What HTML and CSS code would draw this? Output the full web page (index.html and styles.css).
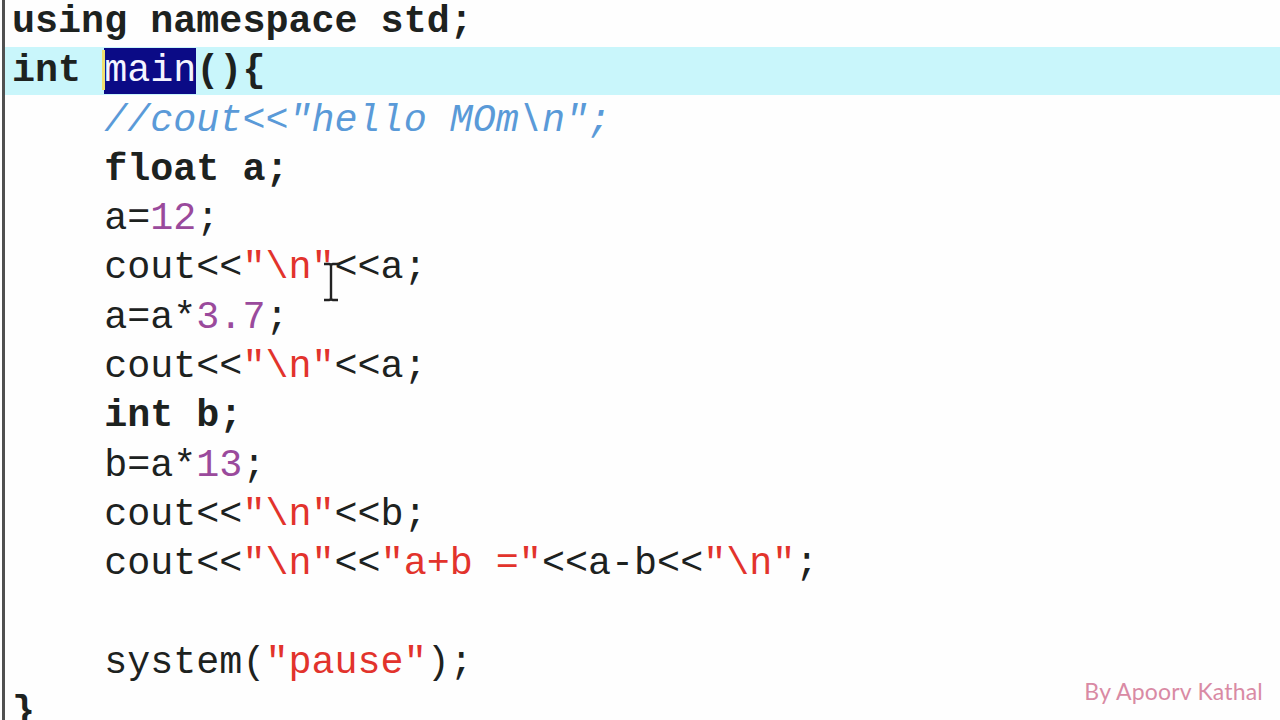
FILE: index.html
```html
<!DOCTYPE html>
<html>
<head>
<meta charset="utf-8">
<link rel="stylesheet" href="styles.css">
</head>
<body>
<div class="editor">
  <div class="code">
    <div class="line b">using namespace std;</div>
    <div class="line cur"><span class="b">int </span><span class="sel"><span class="caret"></span>main</span><span class="b">(){</span></div>
    <div class="line">    <span class="cm">//cout&lt;&lt;"hello MOm\n";</span></div>
    <div class="line">    <span class="b">float a;</span></div>
    <div class="line">    a=<span class="num">12</span>;</div>
    <div class="line">    cout&lt;&lt;<span class="str">"\n"</span>&lt;&lt;a;</div>
    <div class="line">    a=a*<span class="num">3.7</span>;</div>
    <div class="line">    cout&lt;&lt;<span class="str">"\n"</span>&lt;&lt;a;</div>
    <div class="line">    <span class="b">int b;</span></div>
    <div class="line">    b=a*<span class="num">13</span>;</div>
    <div class="line">    cout&lt;&lt;<span class="str">"\n"</span>&lt;&lt;b;</div>
    <div class="line">    cout&lt;&lt;<span class="str">"\n"</span>&lt;&lt;<span class="str">"a+b ="</span>&lt;&lt;a-b&lt;&lt;<span class="str">"\n"</span>;</div>
    <div class="line"> </div>
    <div class="line">    system(<span class="str">"pause"</span>);</div>
    <div class="line b">}</div>
  </div>
  <svg class="ibeam" width="20" height="40" viewBox="0 0 20 40">
    <path d="M3 2 H8 M12 2 H17 M10 3 V37 M3 38 H8 M12 38 H17 M8 2 Q10 2 10 4 Q10 2 12 2 M8 38 Q10 38 10 36 Q10 38 12 38" stroke="#222" stroke-width="2.4" fill="none"/>
  </svg>
  <div class="mark">By Apoorv Kathal</div>
</div>
</body>
</html>
```

FILE: styles.css
```css
html, body {
  margin: 0;
  padding: 0;
  background: #ffffff;
  overflow: hidden;
}
.editor {
  position: relative;
  width: 1280px;
  height: 720px;
  overflow: hidden;
  background: #fefefe;
}
.code {
  margin-left: 2px;
  margin-top: -2px;
  border-left: 3px solid #505050;
  padding-left: 7px;
  min-height: 760px;
  font-family: "Courier New", "Liberation Mono", monospace;
  font-size: 38.4px;
  line-height: 49.3px;
  color: #1d221f;
}
.line {
  white-space: pre;
  height: 49.3px;
}
.b {
  font-weight: bold;
}
.cur {
  background: #c9f6fb;
  margin-left: -7px;
  padding-left: 7px;
  height: 47.5px;
  margin-bottom: 1.8px;
}
.sel {
  position: relative;
  background: #0b0b86;
  color: #f4f4ff;
  display: inline-block;
  line-height: 46px;
  vertical-align: top;
  margin-top: 1px;
}
.caret {
  position: absolute;
  left: -2px;
  top: 2px;
  width: 3px;
  height: 40px;
  background: #f0e070;
}
.cm {
  color: #5a9ad8;
  font-style: italic;
}
.num {
  color: #9a4a9c;
}
.str {
  color: #e2332c;
}
.ibeam {
  position: absolute;
  left: 321px;
  top: 262px;
}
.mark {
  position: absolute;
  right: 17px;
  bottom: 15px;
  font-family: "Lato", "Open Sans", sans-serif;
  font-size: 23px;
  color: #d98aa4;
  letter-spacing: 0.2px;
}
```
